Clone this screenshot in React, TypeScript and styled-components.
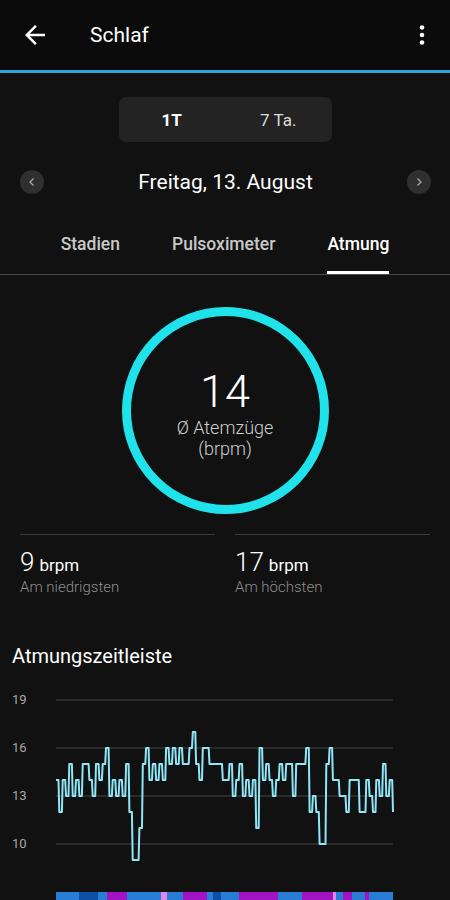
import React from "react";
import styled, { createGlobalStyle } from "styled-components";

const GlobalStyle = createGlobalStyle`
  html, body {
    margin: 0;
    padding: 0;
    background: #111111;
  }
  body {
    font-family: Roboto, "Noto Sans", Arial, sans-serif;
    color: #ffffff;
  }
`;

const Page = styled.div`
  width: 450px;
  height: 900px;
  overflow: hidden;
  background: #111111;
`;

const Header = styled.header`
  height: 70px;
  display: flex;
  align-items: center;
  padding: 0 15px 0 20px;
  background: #0b0b0b;
  border-bottom: 3px solid #2aa6d9;
`;

const Title = styled.h1`
  margin: 0 0 0 40px;
  font-size: 21px;
  font-weight: 400;
  color: #ffffff;
`;

const IconButton = styled.button<{ $push?: boolean }>`
  display: flex;
  align-items: center;
  justify-content: center;
  padding: 0;
  border: 0;
  background: none;
  color: #ffffff;
  margin-left: ${({ $push }) => ($push ? "auto" : "0")};
`;

const Segment = styled.div`
  width: 213px;
  height: 45px;
  margin: 24px auto 0;
  display: grid;
  grid-template-columns: 1fr 1fr;
  background: #232323;
  border-radius: 7px;
`;

const SegmentItem = styled.div<{ $active?: boolean }>`
  display: flex;
  align-items: center;
  justify-content: center;
  font-size: 17px;
  font-weight: ${({ $active }) => ($active ? 700 : 400)};
  color: ${({ $active }) => ($active ? "#ffffff" : "#dddddd")};
`;

const DateRow = styled.div`
  height: 40px;
  margin-top: 20px;
  display: flex;
  align-items: center;
  justify-content: space-between;
  padding: 0 19px 0 20px;
`;

const NavCircle = styled.div`
  width: 24px;
  height: 24px;
  border-radius: 50%;
  background: #2f2f2f;
  display: flex;
  align-items: center;
  justify-content: center;
  color: #a8a8a8;
`;

const DateText = styled.div`
  font-size: 21px;
  color: #ffffff;
`;

const Tabs = styled.nav`
  height: 60px;
  margin-top: 12px;
  display: flex;
  justify-content: center;
  gap: 52px;
  border-bottom: 1px solid #4a4a4a;
`;

const Tab = styled.div<{ $active?: boolean }>`
  display: flex;
  align-items: center;
  box-sizing: border-box;
  padding-top: 3px;
  border-bottom: 3px solid ${({ $active }) => ($active ? "#ffffff" : "transparent")};
  font-size: 17.5px;
  font-weight: 500;
  color: ${({ $active }) => ($active ? "#ffffff" : "#c9c9c9")};
`;

const Ring = styled.div`
  width: 207px;
  height: 207px;
  box-sizing: border-box;
  margin: 32px auto 0;
  border: 9px solid #1fe2ea;
  border-radius: 50%;
  display: flex;
  flex-direction: column;
  align-items: center;
  justify-content: center;
  padding-top: 7px;
`;

const BigValue = styled.div`
  font-size: 45px;
  font-weight: 300;
  line-height: 45px;
  color: #ffffff;
`;

const RingLabel = styled.div`
  margin-top: 3px;
  font-size: 18px;
  font-weight: 300;
  line-height: 21px;
  color: #d0d0d0;
  text-align: center;
`;

const Stats = styled.div`
  margin-top: 20px;
  padding: 0 20px;
  display: grid;
  grid-template-columns: 1fr 1fr;
  gap: 20px;
`;

const Stat = styled.div`
  border-top: 1px solid #3a3a3a;
  padding-top: 12px;
`;

const StatValue = styled.div`
  font-size: 26px;
  font-weight: 300;
  line-height: 30px;
  color: #ffffff;
`;

const StatUnit = styled.span`
  font-size: 17px;
  font-weight: 400;
  margin-left: 5px;
`;

const StatLabel = styled.div`
  font-size: 15px;
  line-height: 14px;
  font-weight: 300;
  color: #8e8e8e;
`;

const SectionTitle = styled.h2`
  margin: 50px 0 0;
  padding-left: 12px;
  font-size: 20px;
  line-height: 24px;
  font-weight: 400;
  color: #ffffff;
`;

const ChartSvg = styled.svg`
  display: block;
  margin-top: 12px;
`;

const values = [
  14, 12, 14, 13, 15, 13, 14, 13, 15, 15, 14, 13, 15, 14, 15, 16, 13, 14, 13, 14,
  13, 15, 12, 9, 9, 11, 15, 16, 14, 15, 14, 15, 14, 16, 15, 16, 15, 16, 15, 15,
  16, 17, 15, 14, 16, 16, 15, 15, 15, 15, 14, 14, 15, 13, 14, 15, 13, 14, 13, 14,
  11, 16, 14, 15, 14, 13, 14, 15, 14, 15, 15, 13, 15, 15, 15, 16, 12, 13, 12, 10,
  10, 15, 16, 14, 14, 13, 13, 12, 14, 14, 14, 12, 12, 14, 13, 12, 14, 13, 15, 13,
  14, 12,
];

// sleep stage strip under the chart: [from x, to x, colour]
const stages: [number, number, string][] = [
  [56, 79, "#2a7dd6"],
  [79, 98, "#0b4fa6"],
  [98, 107, "#2a7dd6"],
  [107, 127, "#a014c4"],
  [127, 161, "#2a7dd6"],
  [161, 167, "#e586e6"],
  [167, 183, "#2a7dd6"],
  [183, 207, "#a014c4"],
  [207, 213, "#2a7dd6"],
  [213, 221, "#0b4fa6"],
  [221, 239, "#2a7dd6"],
  [239, 278, "#a014c4"],
  [278, 302, "#2a7dd6"],
  [302, 333, "#a014c4"],
  [333, 336, "#e586e6"],
  [336, 343, "#2a7dd6"],
  [343, 352, "#a014c4"],
  [352, 365, "#2a7dd6"],
  [365, 369, "#a014c4"],
  [369, 393, "#2a7dd6"],
];

const levelY = (v: number) => 116 - (v - 13) * 16;

const buildPath = () => {
  const step = 337 / (values.length - 1);
  let d = `M56 ${levelY(values[0])}`;
  for (let i = 1; i < values.length; i++) {
    const x = 56 + i * step;
    d += ` L${(x - 0.8).toFixed(1)} ${levelY(values[i - 1])} L${x.toFixed(1)} ${levelY(values[i])}`;
  }
  return d;
};

const BreathChart = () => (
  <ChartSvg width={450} height={220} viewBox="0 0 450 220">
    {[19, 16, 13, 10].map((v) => (
      <g key={v}>
        <line x1={56} x2={393} y1={levelY(v)} y2={levelY(v)} stroke="#444" strokeWidth={1} />
        <text x={12} y={levelY(v) + 4} fill="#a8a8a8" fontSize={13} fontFamily="Roboto, sans-serif">
          {v}
        </text>
      </g>
    ))}
    <path d={buildPath()} fill="none" stroke="#8fe6f6" strokeWidth={2} strokeLinejoin="round" />
    {stages.map(([a, b, c]) => (
      <rect key={a} x={a} y={212} width={b - a} height={10} fill={c} />
    ))}
  </ChartSvg>
);

const App = () => (
  <Page>
    <GlobalStyle />
    <Header>
      <IconButton aria-label="Zurück">
        <svg width={30} height={30} viewBox="0 0 24 24" fill="currentColor">
          <path d="M20 11H7.83l5.59-5.59L12 4l-8 8 8 8 1.41-1.41L7.83 13H20v-2z" />
        </svg>
      </IconButton>
      <Title>Schlaf</Title>
      <IconButton $push aria-label="Menü">
        <svg width={26} height={26} viewBox="0 0 24 24" fill="currentColor">
          <circle cx={12} cy={5} r={2.1} />
          <circle cx={12} cy={12} r={2.1} />
          <circle cx={12} cy={19} r={2.1} />
        </svg>
      </IconButton>
    </Header>

    <Segment>
      <SegmentItem $active>1T</SegmentItem>
      <SegmentItem>7 Ta.</SegmentItem>
    </Segment>

    <DateRow>
      <NavCircle>
        <svg width={12} height={12} viewBox="0 0 12 12" fill="none" stroke="currentColor" strokeWidth={1.3}>
          <path d="M7.5 2.5 4 6l3.5 3.5" />
        </svg>
      </NavCircle>
      <DateText>Freitag, 13. August</DateText>
      <NavCircle>
        <svg width={12} height={12} viewBox="0 0 12 12" fill="none" stroke="currentColor" strokeWidth={1.3}>
          <path d="M4.5 2.5 8 6l-3.5 3.5" />
        </svg>
      </NavCircle>
    </DateRow>

    <Tabs>
      <Tab>Stadien</Tab>
      <Tab>Pulsoximeter</Tab>
      <Tab $active>Atmung</Tab>
    </Tabs>

    <Ring>
      <BigValue>14</BigValue>
      <RingLabel>
        Ø Atemzüge
        <br />
        (brpm)
      </RingLabel>
    </Ring>

    <Stats>
      <Stat>
        <StatValue>
          9<StatUnit>brpm</StatUnit>
        </StatValue>
        <StatLabel>Am niedrigsten</StatLabel>
      </Stat>
      <Stat>
        <StatValue>
          17<StatUnit>brpm</StatUnit>
        </StatValue>
        <StatLabel>Am höchsten</StatLabel>
      </Stat>
    </Stats>

    <SectionTitle>Atmungszeitleiste</SectionTitle>
    <BreathChart />
  </Page>
);

export default App;
